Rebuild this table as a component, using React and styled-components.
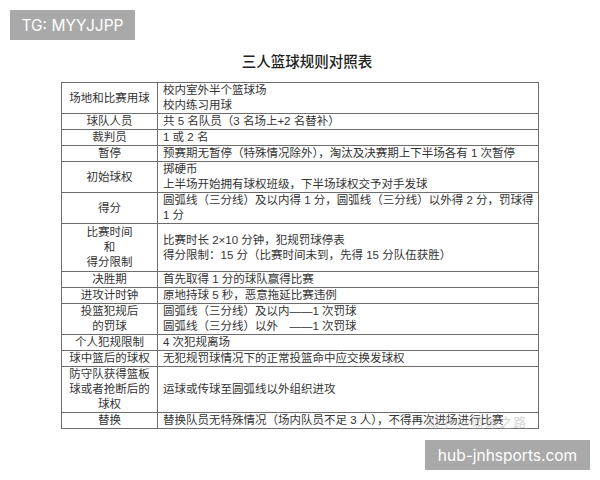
import React from 'react';
import styled, { createGlobalStyle } from 'styled-components';

const rows = [
  { label: ['场地和比赛用球'], value: ['校内室外半个篮球场', '校内练习用球'] },
  { label: ['球队人员'], value: ['共 5 名队员（3 名场上+2 名替补）'] },
  { label: ['裁判员'], value: ['1 或 2 名'] },
  { label: ['暂停'], value: ['预赛期无暂停（特殊情况除外），淘汰及决赛期上下半场各有 1 次暂停'] },
  { label: ['初始球权'], value: ['掷硬币', '上半场开始拥有球权班级，下半场球权交予对手发球'] },
  { label: ['得分'], value: ['圆弧线（三分线）及以内得 1 分，圆弧线（三分线）以外得 2 分，罚球得', '1 分'] },
  { label: ['比赛时间', '和', '得分限制'], value: ['比赛时长 2×10 分钟，犯规罚球停表', '得分限制：15 分（比赛时间未到，先得 15 分队伍获胜）'], tall: true },
  { label: ['决胜期'], value: ['首先取得 1 分的球队赢得比赛'] },
  { label: ['进攻计时钟'], value: ['原地持球 5 秒，恶意拖延比赛违例'] },
  { label: ['投篮犯规后', '的罚球'], value: ['圆弧线（三分线）及以内——1 次罚球', '圆弧线（三分线）以外　——1 次罚球'], mark: true },
  { label: ['个人犯规限制'], value: ['4 次犯规离场'] },
  { label: ['球中篮后的球权'], value: ['无犯规罚球情况下的正常投篮命中应交换发球权'] },
  { label: ['防守队获得篮板', '球或者抢断后的', '球权'], value: ['运球或传球至圆弧线以外组织进攻'] },
  { label: ['替换'], value: ['替换队员无特殊情况（场内队员不足 3 人），不得再次进场进行比赛'] },
];

const GlobalStyle = createGlobalStyle`
  body {
    margin: 0;
    background: #fff;
    font-family: "Liberation Serif", "Noto Sans CJK SC", serif;
  }
`;

const Page = styled.div`
  position: relative;
  width: 600px;
  height: 480px;
  overflow: hidden;
  background: #fff;
  padding: 51px 0 0 61px;
  box-sizing: border-box;
`;

const Title = styled.h1`
  margin: 0 0 12px;
  width: 478px;
  padding-left: 14px;
  box-sizing: border-box;
  text-align: center;
  font-family: "Noto Sans CJK SC", sans-serif;
  font-size: 14.5px;
  line-height: 19px;
  font-weight: 500;
  color: #222;
`;

const Table = styled.table`
  border-collapse: collapse;
  width: 478px;
  table-layout: fixed;
  font-family: "Liberation Sans", "Noto Sans CJK SC", sans-serif;
  font-size: 11.5px;
  line-height: 15px;
  color: #333;
`;

const Cell = styled.td`
  border: 1px solid #6d6d6d;
  padding: ${(p) => (p.$tall ? '1px 0' : '0')};
  vertical-align: middle;
  white-space: nowrap;
  overflow: hidden;
`;

const LabelCell = styled(Cell)`
  width: 95px;
  text-align: center;
`;

const ValueCell = styled(Cell)`
  position: relative;
  padding-left: 5px;
  text-align: left;
  ${(p) => p.$mark && `
    &::after {
      content: '';
      position: absolute;
      right: -2px;
      top: 0;
      width: 2px;
      height: 14px;
      background: #444;
    }
  `}
`;

const Line = styled.div`
  height: 15px;
`;

const Badge = styled.div`
  position: absolute;
  background: #a9a9a9;
  color: #fff;
  font-family: "Inter", "Liberation Sans", sans-serif;
  font-size: 15.5px;
  display: flex;
  align-items: center;
  justify-content: center;
  top: ${(p) => p.$top}px;
  left: ${(p) => p.$left}px;
  width: ${(p) => p.$w}px;
  height: 30px;
`;

const Watermark = styled.div`
  position: absolute;
  left: 426px;
  top: 412px;
  font-family: "Noto Sans CJK SC", sans-serif;
  font-size: 13px;
  color: rgba(170, 170, 170, 0.5);
  letter-spacing: 1px;
`;

export default function App() {
  return (
    <Page>
      <GlobalStyle />
      <Badge $top={10} $left={10} $w={125}>TG: MYYJJPP</Badge>
      <Title>三人篮球规则对照表</Title>
      <Table>
        <tbody>
          {rows.map((r, i) => (
            <tr key={i}>
              <LabelCell $tall={r.tall}>
                {r.label.map((t, j) => <Line key={j}>{t}</Line>)}
              </LabelCell>
              <ValueCell $tall={r.tall} $mark={r.mark}>
                {r.value.map((t, j) => <Line key={j}>{t}</Line>)}
              </ValueCell>
            </tr>
          ))}
        </tbody>
      </Table>
      <Watermark>知乎 @篮球之路</Watermark>
      <Badge $top={440} $left={425} $w={165}>hub-jnhsports.com</Badge>
    </Page>
  );
}
